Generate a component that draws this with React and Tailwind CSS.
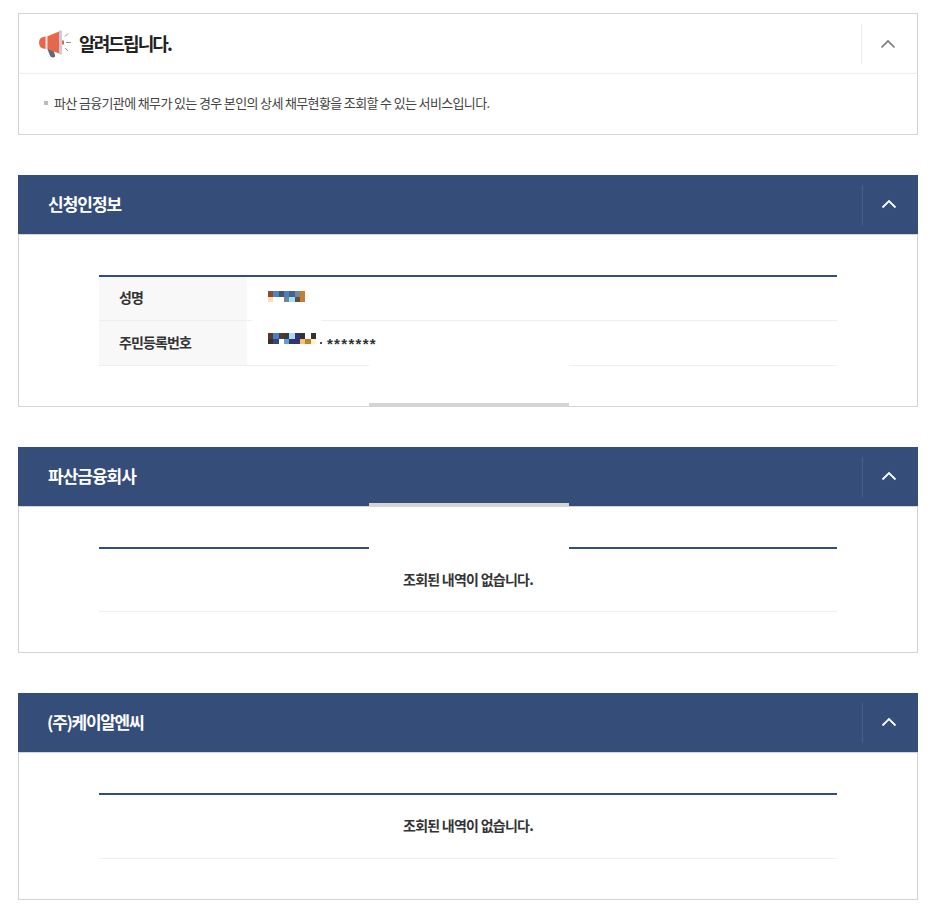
import React from 'react';

const font = { fontFamily: '"Noto Sans CJK KR", "Noto Sans", sans-serif' };

const name1 = [
  ['#8b4a32', '#4a86c0', '#45546a', '#4d7fb8', '#456384', '#6c8aa5', '#c67e33'],
  ['#ffe0a8', '#ffffff', '#ffffff', '#6d8794', '#a8dcff', '#5f5238', '#c67e33'],
];
const name2 = [
  ['#5e352f', '#4a7fc4', '#533a3a', '#3f3a3a', '#a8dcf5', '#33336f', '#333333', '#ffffff', '#333333'],
  ['#333333', '#2f4a7a', '#ffffff', '#5f9fe0', '#33336f', '#33336f', '#ffbe7a', '#c67e33', '#fff5c0'],
];

// blurred-out personal data
const Mosaic = ({ rows, className }) => (
  <svg width={rows[0].length * 5.33} height="11" viewBox={`0 0 ${rows[0].length} 2`} preserveAspectRatio="none" shapeRendering="crispEdges" className={className}>
    {rows.map((row, y) => row.map((c, x) => <rect key={`${x}-${y}`} x={x} y={y} width="1" height="1" fill={c} />))}
  </svg>
);

const Chevron = ({ className, width = 1.6 }) => (
  <svg width="16" height="10" viewBox="0 0 16 10" fill="none" className={className}>
    <path d="M1.5 8.5 L8 2 L14.5 8.5" stroke="currentColor" strokeWidth={width} />
  </svg>
);

const Megaphone = () => (
  <svg width="34" height="30" viewBox="0 0 34 30" fill="none">
    <path d="M9 19 L15 20 L17 26 Q17.5 28.5 15 28.5 Q12.5 28.5 12 26.5 Z" fill="#5f6b7a" />
    <path d="M8 7.5 L8 20 Q1 20 1 13.75 Q1 7.5 8 7.5 Z" fill="#e8674a" />
    <path d="M9 7.5 L21 2.5 L21 24.5 L9 20 Z" fill="#e8674a" />
    <rect x="7.5" y="7" width="2" height="13.5" fill="#e4e4e8" />
    <path d="M21 2 Q22.5 0.5 24 2 L24 25 Q22.5 26.5 21 25 Z" fill="#c9ccd3" />
    <rect x="24" y="11.5" width="2" height="4" fill="#e8674a" />
    <path d="M27 7.5 L30 4.5 M28 13.5 L33 13.5 M27 19 L30 22" stroke="#8a8f98" strokeWidth="1" />
  </svg>
);

const Panel = ({ title, titleClass = 'tracking-[-1px]', children, bodyClass }) => (
  <section className="mt-10 first:mt-0">
    <div className="h-[59px] bg-[#344d79] flex items-center justify-between">
      <h2 className={`pl-[30px] mb-[2px] text-[17px] font-bold text-white ${titleClass}`}>{title}</h2>
      <div className="flex items-center h-10">
        <div className="w-px h-10 bg-[#47608a]" />
        <div className="w-[55px] pr-[3px] mb-[2px] flex justify-center text-white"><Chevron width={1.8} /></div>
      </div>
    </div>
    <div className={`border border-[#d4d4d4] bg-white px-[80px] pt-10 ${bodyClass}`}>
      {children}
    </div>
  </section>
);

const Empty = ({ rowClass }) => (
  <div className={`border-t-2 border-[#344d79] border-b border-b-[#eeeeee] flex items-center justify-center ${rowClass}`}>
    <p className="text-[14px] font-bold text-[#333] tracking-[-0.75px] mb-[2px]">조회된 내역이 없습니다.</p>
  </div>
);

export default function App() {
  return (
    <div style={font} className="relative w-[938px] h-[907px] bg-white pt-[13px] pl-[18px] overflow-hidden">
      <div className="w-[900px] h-[122px] border border-[#d4d4d4] bg-white">
        <div className="h-[60px] border-b border-[#eeeeee] flex items-center justify-between">
          <div className="flex items-center pl-[19px] gap-[7px]">
            <Megaphone />
            <h2 className="text-[18px] font-bold text-[#222] tracking-[-1.9px]">알려드립니다.</h2>
          </div>
          <div className="flex items-center h-10">
            <div className="w-px h-10 bg-[#eeeeee]" />
            <div className="w-[55px] pr-[4px] flex justify-center text-[#777]"><Chevron /></div>
          </div>
        </div>
        <div className="flex items-center pl-[25px] pt-[19px]">
          <span className="w-1 h-1 bg-[#bbbbbb] mr-[6px]" />
          <p className="text-[13px] text-[#444] tracking-[-0.64px]">파산 금융기관에 채무가 있는 경우 본인의 상세 채무현황을 조회할 수 있는 서비스입니다.</p>
        </div>
      </div>

      <div className="mt-10 w-[900px]">
        <Panel title="신청인정보" bodyClass="h-[173px]">
          <div className="border-t-2 border-[#344d79]">
            <div className="flex h-[44px] border-b border-[#eeeeee]">
              <div className="w-[148px] bg-[#f8f8f8] pl-5 pb-[2px] flex items-center text-[14px] font-bold text-[#333] tracking-[-0.9px]">성명</div>
              <div className="flex-1 pl-[21px] pt-[14px]"><Mosaic rows={name1} /></div>
            </div>
            <div className="flex h-[45px] border-b border-[#eeeeee]">
              <div className="w-[148px] bg-[#f8f8f8] pl-5 pb-[1px] flex items-center text-[14px] font-bold text-[#333] tracking-[-0.9px]">주민등록번호</div>
              <div className="flex-1 pl-[21px] pt-3 flex items-start">
                <Mosaic rows={name2} />
                <span className="w-[2px] h-[2px] bg-[#3a4a6a] ml-[4px] mt-[9px]" />
                <span style={{ fontFamily: '"Liberation Sans", sans-serif' }} className="ml-[5px] text-[15px] leading-5 font-bold text-[#333] tracking-[1.3px] mt-[1px]">*******</span>
              </div>
            </div>
          </div>
        </Panel>
        <Panel title="파산금융회사" bodyClass="h-[147px]"><Empty rowClass="h-[65px]" /></Panel>
        <Panel title="(주)케이알엔씨" titleClass="tracking-[-1.3px] -ml-px" bodyClass="h-[148px]"><Empty rowClass="h-[66px]" /></Panel>
      </div>

      {/* floating layer that was still painted over the page */}
      <div className="absolute left-[252px] top-[320px] w-[69px] h-px bg-white" />
      <div className="absolute left-[369px] top-[365px] w-[200px] h-[38px] bg-white" />
      <div className="absolute left-[369px] top-[403px] w-[200px] h-[4px] bg-[#d4d4d4]" />
      <div className="absolute left-[369px] top-[503px] w-[200px] h-[4px] bg-[#d4d4d4]" />
      <div className="absolute left-[369px] top-[507px] w-[200px] h-[45px] bg-white" />
    </div>
  );
}
